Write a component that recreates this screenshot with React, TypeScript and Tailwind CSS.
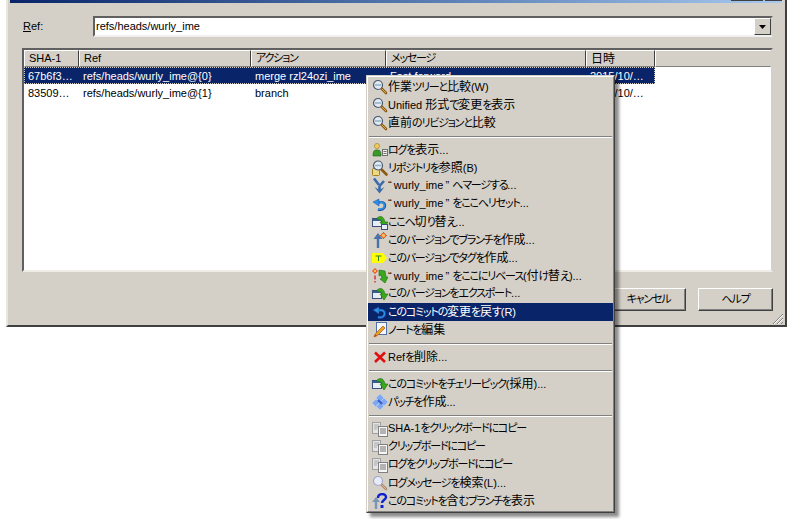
import React from 'react';

const font = { fontFamily: '"Liberation Sans", "Noto Sans CJK JP", sans-serif' };

const columns = [
  { label: 'SHA-1', width: 'w-[55px]' },
  { label: 'Ref', width: 'w-[172px]' },
  { label: 'アクション', width: 'w-[135px]' },
  { label: 'メッセージ', width: 'w-[200px]' },
  { label: '日時', width: 'w-[69px]' },
];

const rows = [
  ['67b6f3…', 'refs/heads/wurly_ime@{0}', 'merge rzl24ozi_ime', 'Fast forward', '2015/10/…'],
  ['83509…', 'refs/heads/wurly_ime@{1}', 'branch', '', '2015/10/…'],
];

// Kana is narrow in the original UI font, kanji is a full 12px, latin 11px
function Txt({ children }: { children: string }) {
  const parts = children.split(/([\u3040-\u30ff]+|[\u3400-\u9fff]+)/);
  return (
    <span>
      {parts.map((p, i) => {
        if (i % 2 === 0) return <span key={i}>{p}</span>;
        const kana = /[\u3040-\u30ff]/.test(p);
        return (
          <span key={i} className={kana ? "text-[11px] tracking-[-1.2px] [font-feature-settings:'palt']" : 'text-[12px]'}>
            {p}
          </span>
        );
      })}
    </span>
  );
}

function Magnifier({ faded }: { faded?: boolean }) {
  return (
    <svg width="16" height="16" viewBox="0 0 16 16">
      <path d="M9 9L14 14" stroke={faded ? '#b08a70' : '#8a5a14'} strokeWidth="2.600" strokeLinecap="round" />
      <path d="M9.500 9.500L14 14" stroke={faded ? '#d8b8a0' : '#e8b040'} strokeWidth="1" />
      <circle cx="6" cy="6" r="4.500" fill={faded ? '#e8ecf8' : '#e4e8f0'} stroke={faded ? '#a0a8c8' : '#48586e'} strokeWidth="1.200" />
      {!faded && <path d="M3.500 6h1M5.500 6h1M7.500 6h1" stroke="#3a7a9a" strokeWidth="1.400" />}
    </svg>
  );
}

function WindowArrow({ small }: { small?: boolean }) {
  return (
    <svg width="16" height="16" viewBox="0 0 16 16">
      <rect x="0.500" y="4.500" width="9" height="8" fill="#e8eef8" stroke="#38507a" />
      <rect x="1" y="5" width="8" height="2" fill="#38609a" />
      <path d="M5 4C9 1 12 3 13 8h3l-4 6-4-6h2C9 6 8 5 5 6z" fill="#3aa81c" stroke="#1c6a10" strokeWidth="0.600" />
      {small && <rect x="9.500" y="10.500" width="6" height="5" fill="#e8eef8" stroke="#38507a" />}
    </svg>
  );
}

function BackArrow() {
  return (
    <svg width="16" height="16" viewBox="0 0 16 16">
      <path d="M6 13.500c4 1 7-1 7-4s-3-4-6-3" stroke="#1c4a9a" strokeWidth="2.400" fill="none" />
      <path d="M6 13c4 1 6.500-1 6.500-3.500S10 5.500 7 6.500" stroke="#2a90e8" strokeWidth="1.600" fill="none" />
      <path d="M1 6l6-3v7z" fill="#2a90e8" stroke="#1c4a9a" strokeWidth="0.500" />
    </svg>
  );
}

function CopyDocs() {
  return (
    <svg width="16" height="16" viewBox="0 0 16 16">
      <rect x="0.500" y="1.500" width="8" height="11" fill="#e4e4e4" stroke="#a0a0a0" />
      <path d="M2 4h5M2 6h5M2 8h3" stroke="#a8a8a8" />
      <rect x="6.500" y="5.500" width="9" height="10" fill="#f6f6f6" stroke="#808080" />
      <path d="M8 8h6M8 10h6M8 12h6" stroke="#707070" />
    </svg>
  );
}

const icons: Record<string, React.ReactNode> = {
  mag: <Magnifier />,
  log: (
    <svg width="16" height="16" viewBox="0 0 16 16">
      <circle cx="5" cy="4" r="2.600" fill="#f0c860" stroke="#a08020" strokeWidth="0.600" />
      <path d="M1 14c0-5 1-6 4-6s4 1 4 6z" fill="#3a9a28" stroke="#1c5a10" strokeWidth="0.600" />
      <rect x="10.500" y="7.500" width="5" height="6" fill="#f0f0f0" stroke="#707070" />
      <path d="M11.500 9.500h3M11.500 11.500h3" stroke="#707070" />
    </svg>
  ),
  browse: (
    <svg width="16" height="16" viewBox="0 0 16 16">
      <rect x="0.500" y="8.500" width="7" height="7" rx="1" fill="#f0d880" stroke="#a08020" />
      <path d="M9 9L14.500 14.500" stroke="#8a5a14" strokeWidth="2.600" strokeLinecap="round" />
      <circle cx="6" cy="5.500" r="4.500" fill="#e4e8f0" stroke="#48586e" strokeWidth="1.200" />
      <path d="M3.500 5.500h5" stroke="#3a7a9a" strokeWidth="1.400" strokeDasharray="1 1" />
    </svg>
  ),
  merge: (
    <svg width="16" height="16" viewBox="0 0 16 16">
      <path d="M2 0.500L7 7M12 3L7.500 8M7.500 8v5" stroke="#3a6aa8" strokeWidth="2.600" fill="none" />
      <path d="M2.500 9l5 6.500 5-6.500-5 3z" fill="#3a6aa8" />
    </svg>
  ),
  back: <BackArrow />,
  switch: <WindowArrow small />,
  branch: (
    <svg width="16" height="16" viewBox="0 0 16 16">
      <path d="M6 16V5" stroke="#4a70a8" strokeWidth="2.400" />
      <path d="M6 1L1.500 7H10.500z" fill="#4a70a8" />
      <path d="M11.500 0v7M8 3.500h7" stroke="#f06020" strokeWidth="1" />
      <circle cx="11.500" cy="3.500" r="2.200" fill="#f8c060" stroke="#e04010" strokeWidth="0.800" />
    </svg>
  ),
  tag: (
    <svg width="16" height="16" viewBox="0 0 16 16">
      <path d="M0 3h11l4 5-4 5H0z" fill="#ffff00" />
      <path d="M3.500 6h6M6.500 6v5" stroke="#308030" strokeWidth="1" />
    </svg>
  ),
  rebase: (
    <svg width="16" height="16" viewBox="0 0 16 16">
      <path d="M3 0v6M0 3h6" stroke="#f06020" strokeWidth="1" />
      <circle cx="3" cy="3" r="1.800" fill="#f8c060" stroke="#e04010" strokeWidth="0.800" />
      <path d="M3 7.500v4M3 13v1.500" stroke="#d01010" strokeWidth="1.200" />
      <path d="M7 2l6 1 1 6h2l-3 6-5-4 2-1-1-3-2 1z" fill="#3aa81c" stroke="#1c6a10" strokeWidth="0.600" />
    </svg>
  ),
  export: <WindowArrow />,
  note: (
    <svg width="16" height="16" viewBox="0 0 16 16">
      <rect x="4.500" y="0.500" width="10" height="12" fill="#f4f6fc" stroke="#5070a8" />
      <path d="M11 4L4 11l-2 4 4-2 7-7z" fill="#f0a020" stroke="#a05a10" strokeWidth="0.700" />
      <path d="M2 15l1-3 2 2z" fill="#d04010" />
    </svg>
  ),
  del: (
    <svg width="16" height="16" viewBox="0 0 16 16">
      <path d="M3 3.500l10 9.500M13 3.500L3 13" stroke="#e01010" strokeWidth="2.600" />
    </svg>
  ),
  patch: (
    <svg width="16" height="16" viewBox="0 0 16 16">
      <path d="M8 0l4 4-4 4-4-4zM12 4l4 4-4 4-4-4zM4 5l4 4-4 4-4-4zM8 8l4 4-4 4-4-4z" fill="#80a8f0" stroke="#b8d0f8" strokeWidth="0.600" />
      <path d="M6 6l4 4" stroke="#3a60d0" strokeWidth="2.400" />
    </svg>
  ),
  copy: <CopyDocs />,
  search: <Magnifier faded />,
  which: (
    <svg width="16" height="16" viewBox="0 0 16 16">
      <path d="M4 16V7" stroke="#7a94b8" strokeWidth="2.400" />
      <path d="M4 4L0 9h8z" fill="#7a94b8" />
      <path d="M6 5c0-5 8-5 8-1 0 3-4 3-4 6" stroke="#1020d0" strokeWidth="2.400" fill="none" />
      <rect x="8.500" y="12" width="3" height="3" fill="#1020d0" />
    </svg>
  ),
};

type MenuEntry = { icon: string; label: string; active?: boolean } | null;

const menu: MenuEntry[] = [
  { icon: 'mag', label: '作業ツリーと比較(W)' },
  { icon: 'mag', label: 'Unified 形式で変更を表示' },
  { icon: 'mag', label: '直前のリビジョンと比較' },
  null,
  { icon: 'log', label: 'ログを表示...' },
  { icon: 'browse', label: 'リポジトリを参照(B)' },
  { icon: 'merge', label: '“\u2009wurly_ime\u2009” へマージする...' },
  { icon: 'back', label: '“\u2009wurly_ime\u2009” をここへリセット...' },
  { icon: 'switch', label: 'ここへ切り替え...' },
  { icon: 'branch', label: 'このバージョンでブランチを作成...' },
  { icon: 'tag', label: 'このバージョンでタグを作成...' },
  { icon: 'rebase', label: '“\u2009wurly_ime\u2009” をここにリベース(付け替え)...' },
  { icon: 'export', label: 'このバージョンをエクスポート...' },
  { icon: 'back', label: 'このコミットの変更を戻す(R)', active: true },
  { icon: 'note', label: 'ノートを編集' },
  null,
  { icon: 'del', label: 'Refを削除...' },
  null,
  { icon: 'export', label: 'このコミットをチェリーピック(採用)...' },
  { icon: 'patch', label: 'パッチを作成...' },
  null,
  { icon: 'copy', label: 'SHA-1をクリックボードにコピー' },
  { icon: 'copy', label: 'クリップボードにコピー' },
  { icon: 'copy', label: 'ログをクリップボードにコピー' },
  { icon: 'search', label: 'ログメッセージを検索(L)...' },
  { icon: 'which', label: 'このコミットを含むブランチを表示' },
];

function ContextMenu() {
  return (
    <div className="absolute left-[366px] top-[75px] w-[249px] bg-[#d4d0c8] border border-t-[#d4d0c8] border-l-[#d4d0c8] border-r-[#404040] border-b-[#404040] shadow-[4px_4px_3px_rgba(0,0,0,0.45)]">
      <div className="border border-t-white border-l-white border-r-[#808080] border-b-[#808080] py-px">
        {menu.map((item, i) =>
          item === null ? (
            <div key={i} className="h-[9px] flex items-center px-px">
              <div className="w-full h-[2px] border-t border-t-[#808080] border-b border-b-white" />
            </div>
          ) : (
            <div
              key={i}
              className={`h-[18px] flex items-center pl-[4px] whitespace-nowrap ${
                item.active ? 'bg-[#0a246a] text-white' : 'text-black'
              }`}
            >
              <span className="w-[16px] h-[16px] shrink-0 flex">{icons[item.icon]}</span>
              <span className="pb-px">
                <Txt>{item.label}</Txt>
              </span>
            </div>
          )
        )}
      </div>
    </div>
  );
}

function HeaderCell({ label, width }: { label: string; width: string }) {
  return (
    <div className={`${width} h-[17px] flex items-center shrink-0 pl-[4px] border border-t-white border-l-white border-r-[#404040] border-b-[#808080]`}>
      <Txt>{label}</Txt>
    </div>
  );
}

function Button({ label }: { label: string }) {
  return (
    <div className="w-[75px] h-[23px] flex items-center justify-center bg-[#d4d0c8] border border-t-white border-l-white border-r-[#404040] border-b-[#404040] shadow-[inset_-1px_-1px_0_#808080]">
      <Txt>{label}</Txt>
    </div>
  );
}

export default function App() {
  return (
    <div className="relative w-[789px] h-[519px] bg-white overflow-hidden text-[11px] leading-none text-black" style={font}>
      <div className="ml-[6px] w-[781px] h-[327px] bg-[#d4d0c8] border-l-2 border-l-[#e8e6e0] border-r-2 border-r-[#404040] border-b-2 border-b-[#404040] flex flex-col">
        {/* Title bar, cut off by the top of the capture */}
        <div className="h-[3px] ml-[2px] mr-[3px] bg-gradient-to-r from-[#0a246a] to-[#a6caf0] shrink-0 flex justify-end gap-[2px]">
          <div className="w-[32px] h-px bg-[#404040]" />
          <div className="w-[17px] h-px bg-[#404040]" />
        </div>

        <div className="pl-[14px] pr-[12px] pt-[13px] flex flex-col">
          {/* Ref selector */}
          <div className="flex items-center h-[21px]">
            <span className="w-[71px] pl-[1px]">
              <span className="underline">R</span>ef:
            </span>
            <div className="flex-1 h-[21px] flex items-center bg-white border-2 border-t-[#606060] border-l-[#606060] border-r-[#d4d0c8] border-b-[#f0f0f0]">
              <span className="flex-1 pl-[1px]">refs/heads/wurly_ime</span>
              <div className="w-[17px] h-[17px] flex items-center justify-center bg-[#d4d0c8] border border-t-white border-l-white border-r-[#404040] border-b-[#404040]">
                <svg width="7" height="4" viewBox="0 0 7 4">
                  <path d="M0 0h7L3.500 4z" fill="#000" />
                </svg>
              </div>
            </div>
          </div>

          {/* Reflog list */}
          <div className="mt-[11px] h-[224px] bg-white border-2 border-t-[#606060] border-l-[#606060] border-r-[#d4d0c8] border-b-[#f0ede6] flex flex-col overflow-hidden">
            <div className="flex bg-[#d4d0c8]">
              {columns.map((c) => (
                <HeaderCell key={c.label} label={c.label} width={c.width} />
              ))}
              <div className="flex-1 h-[17px] border border-t-white border-l-white border-r-[#d4d0c8] border-b-[#808080]" />
            </div>
            {rows.map((row, r) => (
              <div
                key={r}
                className={`w-[631px] h-[17px] flex items-center ${
                  r === 0 ? 'bg-[#0a246a] text-white outline-1 outline-dotted outline-[#d4d0c8] -outline-offset-1' : ''
                }`}
              >
                {row.map((cell, c) => (
                  <div key={c} className={`${columns[c].width} pl-[4px] pt-px whitespace-nowrap`}>
                    {cell}
                  </div>
                ))}
              </div>
            ))}
          </div>

          {/* Dialog buttons */}
          <div className="mt-[16px] flex justify-end gap-[12px]">
            <Button label="キャンセル" />
            <Button label="ヘルプ" />
          </div>
        </div>
      </div>

      {/* Resize grip */}
      <svg className="absolute left-[772px] top-[313px]" width="12" height="12" viewBox="0 0 12 12">
        <path d="M11 1L1 11M11 5L5 11M11 9L9 11" stroke="#808080" strokeWidth="1" />
        <path d="M11 2L2 11M11 6L6 11" stroke="#ffffff" strokeWidth="1" />
      </svg>

      <ContextMenu />
    </div>
  );
}
